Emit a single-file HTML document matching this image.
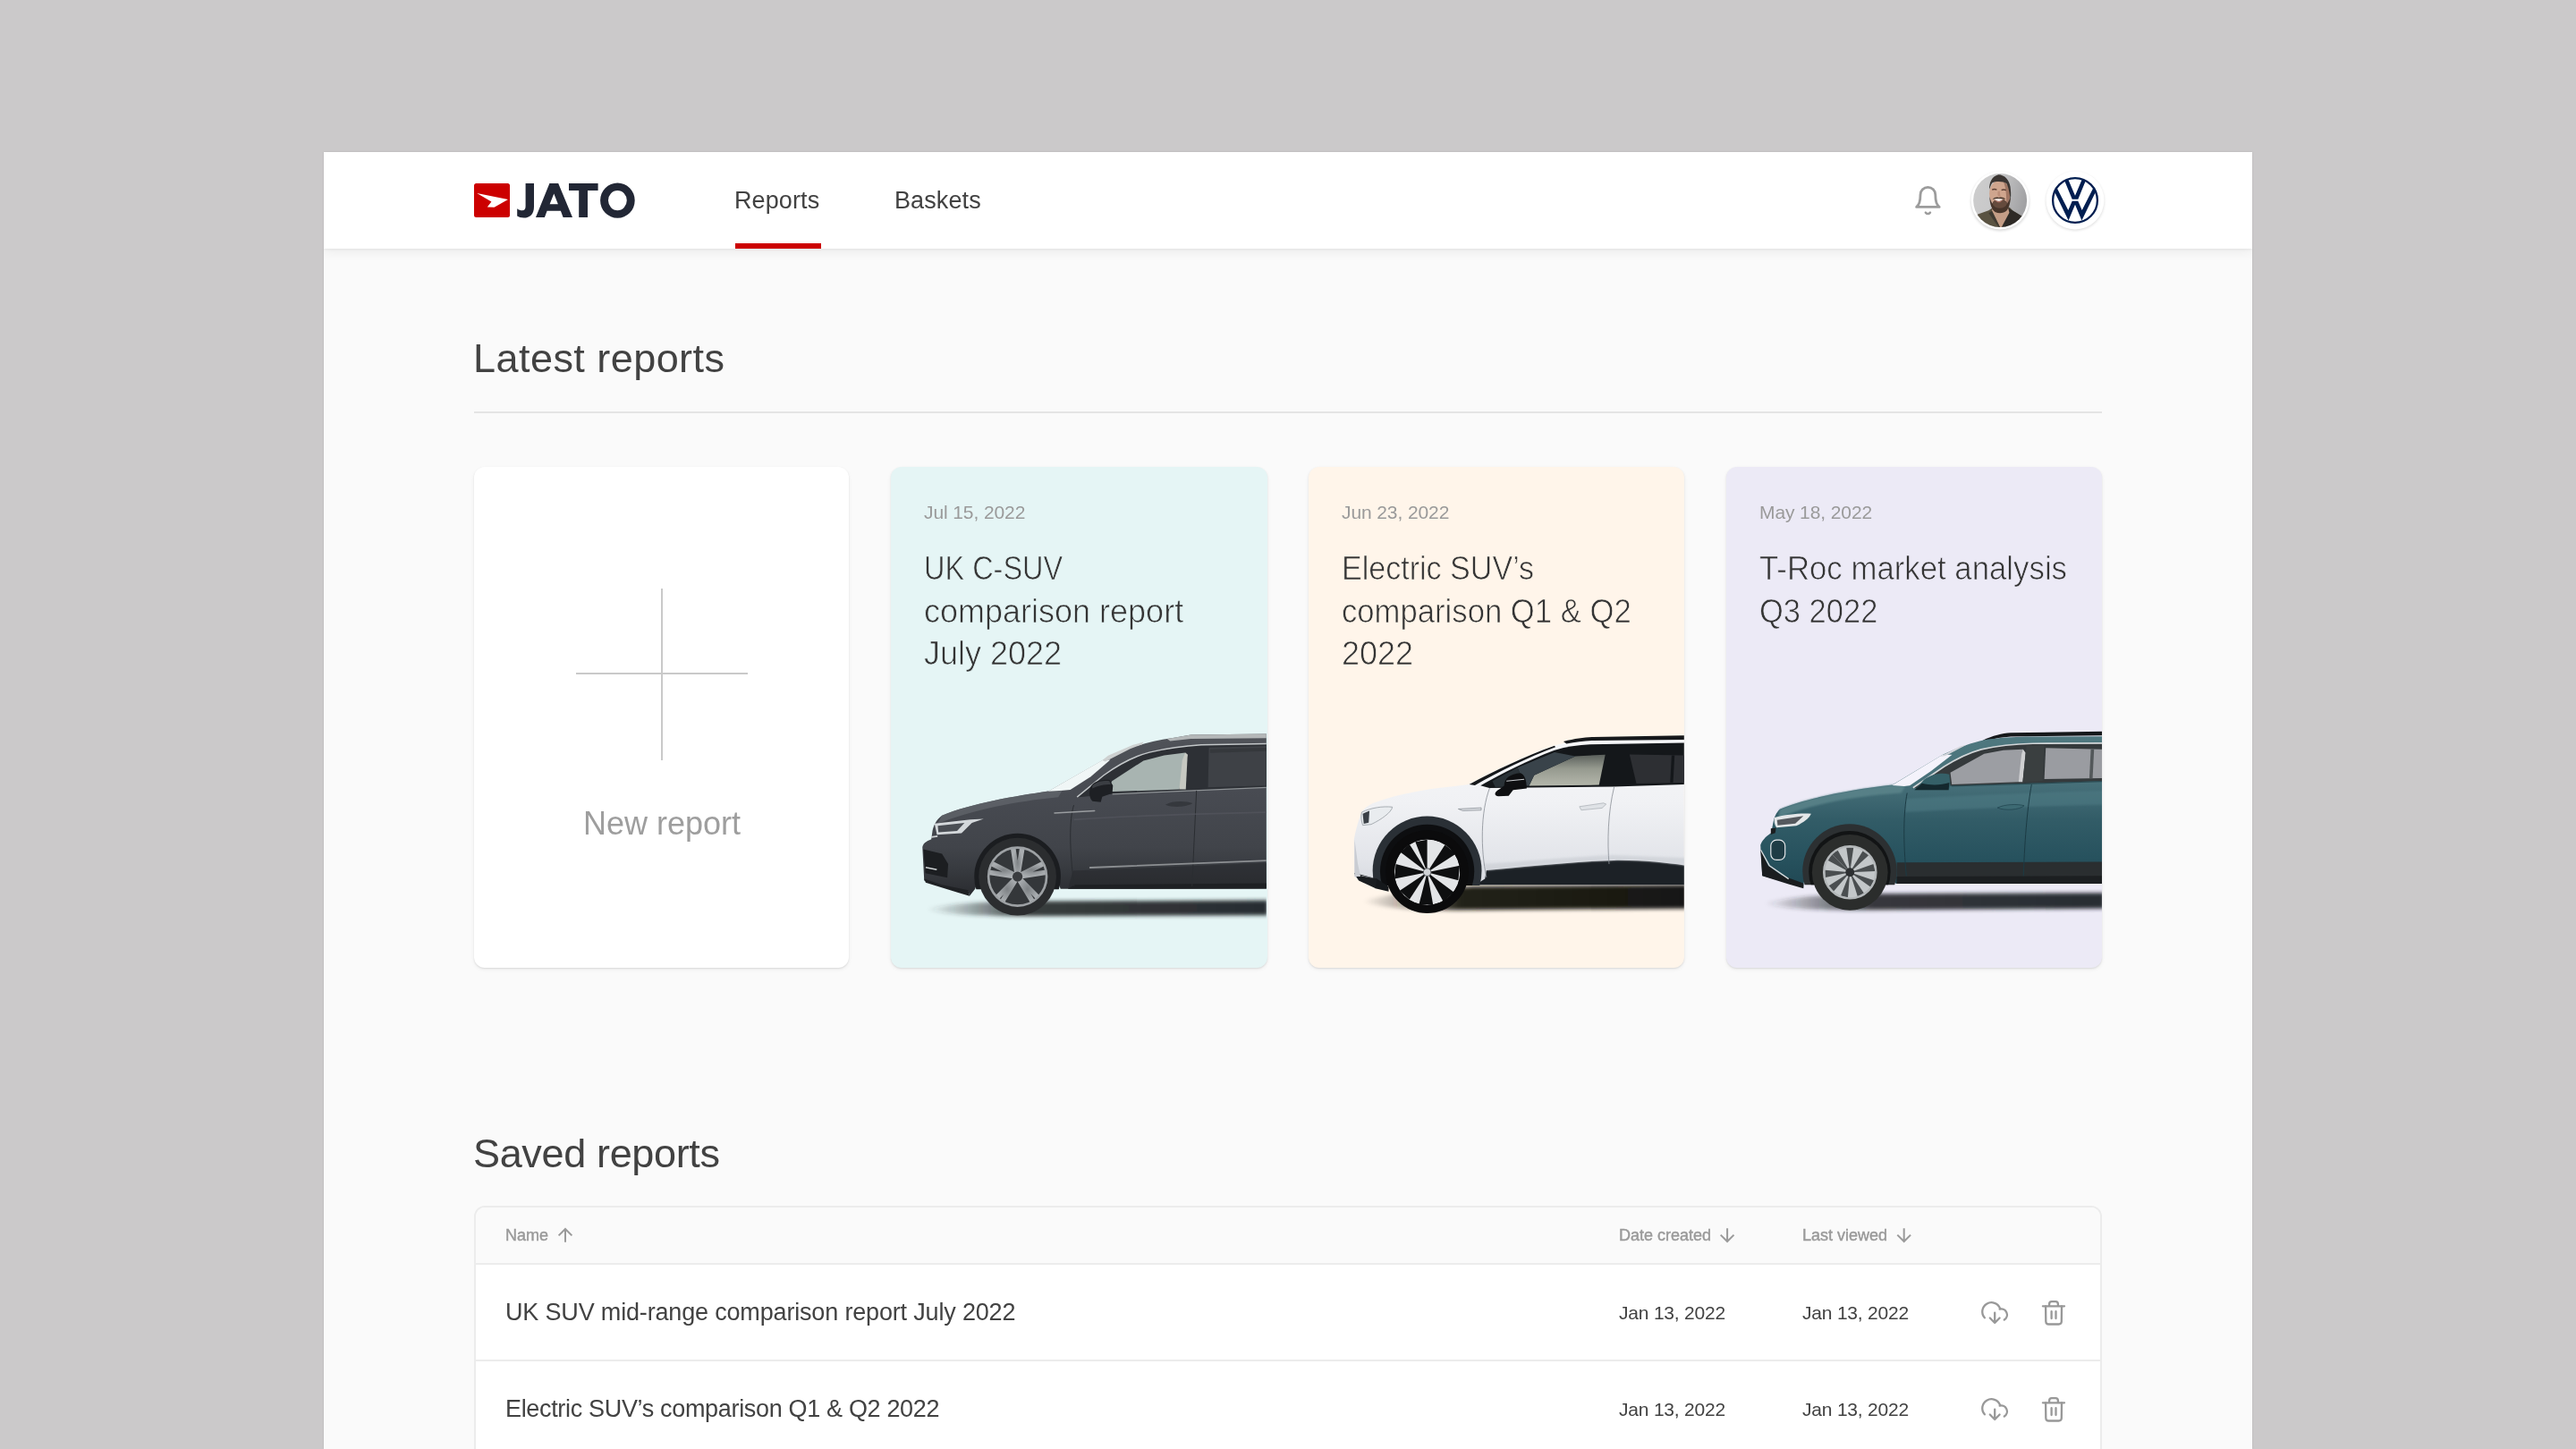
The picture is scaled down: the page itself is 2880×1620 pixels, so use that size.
<!DOCTYPE html>
<html lang="en">
<head>
<meta charset="utf-8">
<title>JATO Reports</title>
<style>
*{box-sizing:border-box;margin:0;padding:0}
html,body{width:2880px;height:1620px;overflow:hidden;background:#cbc9ca}
body{position:relative;font-family:"Liberation Sans",sans-serif;color:#424242}
.abs{position:absolute}
.t{position:absolute;white-space:nowrap;will-change:transform}
#frame{position:absolute;left:362px;top:170px;width:2155.6px;height:1450px;background:#fafafa;box-shadow:0 0 2.5px rgba(0,0,0,.09);overflow:hidden}
#hdr{position:absolute;left:0;top:0;width:2156px;height:108px;background:#fff;box-shadow:0 1px 3px rgba(0,0,0,.06),0 4px 12px rgba(0,0,0,.06)}
.nav{font-size:27px;line-height:27px;color:#424242;letter-spacing:0.1px}
.h1{font-size:45px;line-height:45px;color:#424242}
.card{position:absolute;top:521.6px;width:420px;height:560px;border-radius:12px;overflow:hidden;box-shadow:0 1px 2px rgba(0,0,0,.10),0 2px 5px rgba(0,0,0,.05)}
.cdate{font-size:21px;line-height:21px;color:#9a9a9a;left:37px;top:40.3px;letter-spacing:-0.1px}
.ctitle{will-change:transform;position:absolute;left:37px;top:90px;font-size:36px;line-height:47.5px;color:#343434;white-space:nowrap}
.car{position:absolute;left:0;top:0;width:420px;height:560px}
#tbl{position:absolute;left:530px;top:1348px;width:1820px;height:300px;border:2px solid #ececec;border-radius:12px;background:#fff;overflow:hidden}
.th{font-size:18px;line-height:18px;color:#9a9a9a;-webkit-text-stroke:0.45px #9a9a9a;letter-spacing:0px}
.rt{font-size:27px;line-height:27px;color:#424242;letter-spacing:-0.17px}
.dt{font-size:21px;line-height:21px;color:#424242;letter-spacing:-0.2px}
.ico{position:absolute;overflow:visible}
</style>
</head>
<body>
<div id="frame"><div id="hdr"></div></div>

<!-- LOGO -->
<svg class="ico" style="left:530px;top:205px" width="182" height="40" viewBox="0 0 182 40">
  <rect x="0" y="0" width="40" height="38" rx="2.5" fill="#cc0000"/>
  <path d="M3.2 10.9 L38 18 L22.6 26.8 L14.8 26.5 L19.4 20.6 Z" fill="#fff"/>
  <g fill="#222735">
    <path d="M57.6 0 H67 V26 C67 34.5 62.5 38.6 55.6 38.6 C52.5 38.6 50 37.8 48.2 36.6 V28.2 C49.9 29.5 51.9 30.3 54 30.3 C56.6 30.3 57.6 28.6 57.6 25.6 Z"/>
    <path d="M84.4 0 H94.2 L110 38 H99.6 L96.9 30.8 H81.6 L78.9 38 H69 Z M84.6 23.2 H93.9 L89.3 11.4 Z"/>
    <path d="M106 0 H138.6 V8 H127 V38 H117.2 V8 H106 Z"/>
    <path fill-rule="evenodd" d="M160.4 -0.6 A19.3 19.7 0 1 0 160.4 38.8 A19.3 19.7 0 1 0 160.4 -0.6 Z M160.4 8 A10.4 11.1 0 1 1 160.4 30.2 A10.4 11.1 0 1 1 160.4 8 Z"/>
  </g>
</svg>

<!-- NAV -->
<div class="t nav" style="left:821px;top:210.5px">Reports</div>
<div class="abs" style="left:822px;top:272px;width:96px;height:6px;background:#cc0000"></div>
<div class="t nav" style="left:1000px;top:210.5px">Baskets</div>

<!-- HEADER ICONS placeholder -->

<!-- LATEST REPORTS -->
<div class="t h1" style="left:529px;top:378px;letter-spacing:0.45px">Latest reports</div>
<div class="abs" style="left:530px;top:460px;width:1820px;height:2px;background:#e4e4e4"></div>

<div class="card" style="left:530px;width:419px;background:#fff">
  <div class="abs" style="left:209px;top:136px;width:2px;height:192px;background:#c9c9c9"></div>
  <div class="abs" style="left:114px;top:230px;width:192px;height:2px;background:#c9c9c9"></div>
  <div class="t" style="left:0;width:420px;text-align:center;top:381px;font-size:36px;line-height:36px;color:#9e9e9e">New report</div>
</div>

<div class="card" id="c2" style="left:996px;width:420.8px;background:#e5f5f5">
  <!--CAR1S--><svg class="car" viewBox="0 0 420 560" width="420" height="560">
  <defs>
    <linearGradient id="c1body" x1="0" y1="0" x2="0" y2="1"><stop offset="0" stop-color="#505359"/><stop offset="0.35" stop-color="#484b52"/><stop offset="0.7" stop-color="#41444a"/><stop offset="0.85" stop-color="#36393e"/><stop offset="1" stop-color="#292b2f"/></linearGradient>
    <linearGradient id="c1sh" x1="0" y1="0" x2="1" y2="0"><stop offset="0" stop-color="#2a2e30" stop-opacity="0"/><stop offset="0.12" stop-color="#2a2e30" stop-opacity="0.35"/><stop offset="0.3" stop-color="#23272a" stop-opacity="0.9"/><stop offset="1" stop-color="#202427" stop-opacity="0.95"/></linearGradient>
    <radialGradient id="c1rim" cx="0.5" cy="0.5" r="0.5"><stop offset="0" stop-color="#7d8184"/><stop offset="1" stop-color="#a9adb0"/></radialGradient>
    <filter id="c1blur" x="-10%" y="-60%" width="120%" height="220%"><feGaussianBlur stdDeviation="14"/></filter>
    <filter id="c1soft"><feGaussianBlur stdDeviation="3"/></filter>
    <clipPath id="c1clip"><rect x="0" y="0" width="2390" height="1449"/></clipPath>
    <clipPath id="c1arch"><rect x="380" y="700" width="700" height="470"/></clipPath>
  </defs>
  <g transform="translate(24 278.4) scale(0.165631)" clip-path="url(#c1clip)">
    <!-- ground shadow -->
    <path d="M90 1305 C250 1265 500 1250 900 1250 L2400 1245 L2400 1345 L700 1352 C400 1350 180 1335 90 1305 Z" fill="url(#c1sh)" filter="url(#c1blur)"/>
    <!-- body -->
    <path d="M80 1112 L68 885 C75 852 108 842 128 832 L134 792 C140 742 160 702 200 672 C400 590 700 540 920 508 L1290 296 C1450 212 1600 172 1750 150 L1880 128 L2400 122 L2400 1166 L1050 1168 L1000 1168 A296 296 0 0 0 424 1168 L386 1216 L378 1182 L200 1152 Z" fill="url(#c1body)"/>
    <!-- hood highlight -->
    <path d="M200 672 C400 590 700 540 920 508 L1015 497 L985 548 C700 575 400 635 170 728 Z" fill="#62666c" opacity="0.75" filter="url(#c1soft)"/>
    <!-- lower body darker -->
    <path d="M1085 1045 L2400 992 L2400 1166 L1050 1168 Z" fill="#26282c" opacity="0.55"/>
    <path d="M1095 1140 L2400 1130 L2400 1166 L1050 1168 Z" fill="#1c1e21" opacity="0.8"/>
    <!-- windshield sliver -->
    <path d="M916 510 L1290 295 L1336 296 L1205 410 L1066 498 L1016 503 Z" fill="#f0f6f6"/>
    <!-- roof rails -->
    <path d="M1282 300 L1322 268 L1490 196 L1560 176 L1552 192 L1470 222 L1302 308 Z" fill="#cdd0d0"/>
    <path d="M1720 154 L1880 128 L2400 122 L2400 150 L1880 154 L1740 170 Z" fill="#b4b7b8"/>
    <!-- window surround -->
    <path d="M1108 550 L1290 402 C1400 322 1500 272 1600 246 C1750 212 1850 202 1950 196 L2400 188 L2400 482 L1350 527 Z" fill="#2d3035"/>
    <path d="M1112 548 L1290 402 C1400 322 1500 272 1600 246 C1750 212 1850 202 1950 196 L2400 188" fill="none" stroke="#c3c7c9" stroke-width="9"/>
    <!-- front glass -->
    <path d="M1312 512 L1348 440 L1560 302 L1700 266 L1842 248 L1858 262 L1802 496 Z" fill="#a8b4b1"/>
    <path d="M1842 248 L1858 262 L1846 496 L1802 496 L1822 300 Z" fill="#c6c8c1"/>
    <!-- rear glass -->
    <path d="M2002 214 L2400 202 L2400 470 L1996 482 Z" fill="#3e4146"/>
    <path d="M2010 250 L2400 238 L2400 215 L2010 226 Z" fill="#35383c"/>
    <!-- beltline -->
    <path d="M1350 528 L2400 482" fill="none" stroke="#8f9396" stroke-width="7"/>
    <!-- mirror -->
    <path d="M1198 502 C1200 452 1260 426 1332 432 L1354 470 L1350 522 L1282 546 L1272 582 L1216 576 C1194 552 1194 522 1198 502 Z" fill="#1e2024"/>
    <path d="M1215 470 C1250 440 1300 436 1330 440 L1340 462 C1300 462 1250 470 1215 490 Z" fill="#3b3e43"/>
    <!-- door lines -->
    <path d="M1090 602 C1058 700 1060 900 1092 1150" fill="none" stroke="#2a2d31" stroke-width="6"/>
    <path d="M1918 504 L1888 1150" fill="none" stroke="#2a2d31" stroke-width="6"/>
    <!-- handle -->
    <path d="M1708 600 C1760 568 1850 574 1892 590 C1850 616 1760 622 1708 600 Z" fill="#35383d"/>
    <!-- side badge / crease -->
    <path d="M960 656 L1230 640" fill="none" stroke="#9a9da0" stroke-width="9" stroke-linecap="round"/>
    <path d="M1090 700 C1400 680 1900 660 2400 650" fill="none" stroke="#565960" stroke-width="10" opacity="0.6"/>
    <!-- lower chrome trim -->
    <path d="M1200 1024 L2400 976" fill="none" stroke="#8c8f92" stroke-width="11" stroke-linecap="round"/>
    <!-- wheel arch -->
    <g clip-path="url(#c1arch)"><circle cx="710" cy="1085" r="292" fill="#1b1d20"/></g>
    <!-- front fascia -->
    <path d="M150 726 L392 700 L482 695 L402 722 L332 792 L166 802 Z" fill="#d4d8db"/>
    <path d="M172 742 L352 722 L302 776 L176 786 Z" fill="#4a4e54"/>
    <path d="M128 818 L170 812" stroke="#cfd3d5" stroke-width="10"/>
    <path d="M74 900 L200 930 L242 1000 L236 1092 L88 1062 Z" fill="#1c1e21"/>
    <path d="M90 1022 L165 1038" stroke="#cfd3d5" stroke-width="9"/>
    <path d="M80 1100 L200 1140 L378 1176 L386 1216 L300 1190 L90 1125 Z" fill="#1f2124"/>
    <!-- wheel -->
    <circle cx="710" cy="1085" r="262" fill="#2b2d2f"/>
    <circle cx="710" cy="1085" r="204" fill="#34373a"/>
    <g stroke="url(#c1rim)" stroke-width="34" stroke-linecap="butt">
      <path d="M710 1085 L680 890 M710 1085 L742 890"/>
      <path d="M710 1085 L886 996 M710 1085 L905 1056"/>
      <path d="M710 1085 L848 1226 M710 1085 L812 1254"/>
      <path d="M710 1085 L606 1254 M710 1085 L572 1226"/>
      <path d="M710 1085 L515 1056 M710 1085 L534 996"/>
    </g>
    <circle cx="710" cy="1085" r="196" fill="none" stroke="#9da1a4" stroke-width="16"/>
    <circle cx="710" cy="1085" r="34" fill="#3a3c3f"/>
  </g>
</svg>
<!--CAR1E-->
  <div class="t cdate">Jul 15, 2022</div>
  <div class="ctitle" style="-webkit-text-stroke:0.7px #e5f5f5"><span style="display:inline-block;transform-origin:0 50%;transform:scaleX(0.902)">UK C-SUV</span><br>comparison report<br>July 2022</div>
</div>

<div class="card" id="c3" style="left:1463.4px;width:419.6px;background:#fff5ea">
  <!--CAR2S--><svg class="car" viewBox="0 0 420 560" width="420" height="560">
  <defs>
    <linearGradient id="c2body" x1="0" y1="0" x2="0" y2="1"><stop offset="0" stop-color="#f6f7f9"/><stop offset="0.45" stop-color="#f0f1f4"/><stop offset="0.8" stop-color="#e3e5ea"/><stop offset="1" stop-color="#d5d8de"/></linearGradient>
    <linearGradient id="c2sh" x1="0" y1="0" x2="1" y2="0"><stop offset="0" stop-color="#171412" stop-opacity="0"/><stop offset="0.1" stop-color="#171412" stop-opacity="0.25"/><stop offset="0.3" stop-color="#171412" stop-opacity="0.95"/><stop offset="1" stop-color="#171412" stop-opacity="1"/></linearGradient>
    <linearGradient id="c2glass" x1="0" y1="0" x2="0" y2="1"><stop offset="0" stop-color="#5b605c"/><stop offset="0.45" stop-color="#969a8f"/><stop offset="1" stop-color="#b4b7ab"/></linearGradient>
    <filter id="c2blur" x="-10%" y="-60%" width="120%" height="220%"><feGaussianBlur stdDeviation="12"/></filter>
    <filter id="c2soft"><feGaussianBlur stdDeviation="5"/></filter>
    <clipPath id="c2clip"><rect x="0" y="0" width="2374" height="1449"/></clipPath>
    <clipPath id="c2arch"><rect x="250" y="600" width="800" height="545"/></clipPath>
  </defs>
  <g transform="translate(26.6 278.4) scale(0.165631)" clip-path="url(#c2clip)">
    <!-- ground shadow -->
    <path d="M200 1250 C350 1210 600 1170 950 1150 L2400 1140 L2400 1300 L800 1310 C500 1310 300 1290 200 1250 Z" fill="url(#c2sh)" filter="url(#c2blur)"/>
    <!-- body -->
    <path d="M150 1085 L146 835 C160 760 180 690 200 645 C230 610 260 592 300 580 C450 525 650 492 800 478 L920 462 C1100 370 1300 270 1500 200 C1580 178 1650 165 1720 158 L2400 138 L2400 1140 L960 1140 A340 340 0 0 0 300 1100 L290 1160 L180 1110 Z" fill="url(#c2body)"/>
    <!-- black roof -->
    <path d="M1560 172 C1640 152 1700 146 1760 142 L2400 132 L2400 160 L1760 166 C1700 170 1640 176 1580 188 Z" fill="#16181b"/>
    <!-- dark glasshouse -->
    <path d="M1000 470 C1150 385 1320 300 1500 232 C1580 206 1660 196 1740 192 L2400 182 L2400 462 L1900 478 L1060 486 Z" fill="#14171a"/>
    <path d="M924 462 C1100 370 1300 272 1500 202 L1506 210 C1320 280 1130 372 962 468 Z" fill="#16181b"/>
    <!-- front glass -->
    <path d="M1328 472 L1362 400 L1640 272 L1842 262 L1800 466 Z" fill="url(#c2glass)"/>
    <path d="M1250 350 L1500 245 L1640 272 L1362 400 L1328 472 L1300 472 Z" fill="#39434a"/>
    <path d="M1080 440 L1250 350 L1300 472 L1100 480 Z" fill="#2a3237"/>
    <!-- rear glass -->
    <path d="M2006 260 L2400 266 L2400 450 L2052 456 Z" fill="#2d2f33"/>
    <path d="M2290 266 L2310 266 L2300 450 L2280 450 Z" fill="#14171a"/>
    <!-- lower cladding -->
    <path d="M1040 1042 C1300 1020 1600 985 1900 975 C2100 972 2280 995 2400 1012 L2400 1140 L965 1140 L1030 1100 Z" fill="#1c2126"/>
    <!-- wheel arch cladding -->
    <g clip-path="url(#c2arch)">
      <circle cx="640" cy="1045" r="368" fill="#2a3036"/>
      <circle cx="640" cy="1050" r="318" fill="#0d0e10"/>
    </g>
    <!-- front lower lip -->
    <path d="M148 1060 L185 1075 L295 1100 L290 1165 L380 1185 L380 1150 L300 1100 Z" fill="#15181b"/>
    <path d="M146 1060 L200 1082 L300 1100 L292 1165 L178 1112 Z" fill="#1a1d20"/>
    <!-- headlight -->
    <path d="M198 650 C260 620 340 608 405 615 C400 650 330 700 262 732 L205 738 C195 710 192 680 198 650 Z" fill="#e9ecef" stroke="#9aa0a6" stroke-width="5"/>
    <path d="M205 660 L250 640 L245 720 L212 728 Z" fill="#3b4046"/>
    <!-- body shading -->
    <path d="M150 835 L172 1000 L190 1085 L150 1085 Z" fill="#c9ccd2"/>
    <path d="M1020 1000 C1300 985 1600 950 1900 940 L2400 960 L2400 1012 C2280 995 2100 972 1900 975 C1600 985 1300 1020 1040 1042 Z" fill="#cfd2d8" opacity="0.8" filter="url(#c2soft)"/>
    <!-- door lines -->
    <path d="M1062 486 C1000 650 1000 900 1040 1090" fill="none" stroke="#8b9097" stroke-width="5"/>
    <path d="M1902 480 C1860 650 1855 850 1868 1000" fill="none" stroke="#8b9097" stroke-width="5"/>
    <!-- handle & badge -->
    <path d="M1668 612 L1830 588 L1848 596 L1820 622 L1680 636 Z" fill="#dfe2e6" stroke="#a3a8ae" stroke-width="4"/>
    <path d="M850 628 L1005 620 L1005 636 L880 640 Z" fill="#d9dce0" stroke="#7d838a" stroke-width="4"/>
    <!-- mirror -->
    <path d="M1100 520 C1110 500 1140 490 1160 470 C1160 420 1200 390 1270 385 C1300 400 1310 430 1312 490 L1220 500 L1190 540 L1120 542 C1100 540 1096 530 1100 520 Z" fill="#0e0f11"/>
    <path d="M1175 440 L1295 428" stroke="#c9ccd0" stroke-width="7"/>
    <!-- wheel -->
    <circle cx="640" cy="1052" r="280" fill="#0b0b0c"/>
    <circle cx="640" cy="1055" r="222" fill="#e3e5e7"/>
    <g fill="#0e0f10">
      <path d="M640 1055 L560 850 L640 836 Z"/>
      <path d="M640 1055 L760 870 L835 930 Z"/>
      <path d="M640 1055 L860 1010 L850 1110 Z"/>
      <path d="M640 1055 L820 1190 L750 1255 Z"/>
      <path d="M640 1055 L680 1275 L585 1272 Z"/>
      <path d="M640 1055 L520 1240 L455 1180 Z"/>
      <path d="M640 1055 L420 1100 L428 1000 Z"/>
      <path d="M640 1055 L460 920 L520 865 Z"/>
    </g>
    <circle cx="640" cy="1055" r="228" fill="none" stroke="#0b0b0c" stroke-width="14"/>
    <circle cx="640" cy="1055" r="26" fill="#cfd2d5" stroke="#55595d" stroke-width="6"/>
  </g>
</svg>
<!--CAR2E-->
  <div class="t cdate">Jun 23, 2022</div>
  <div class="ctitle" style="-webkit-text-stroke:0.7px #fff5ea"><span style="display:inline-block;transform-origin:0 50%;transform:scaleX(0.946)">Electric SUV’s</span><br><span style="display:inline-block;transform-origin:0 50%;transform:scaleX(0.963)">comparison Q1 &amp; Q2</span><br>2022</div>
</div>

<div class="card" id="c4" style="left:1930px;background:#eceaf6">
  <!--CAR3S--><svg class="car" viewBox="0 0 420 560" width="420" height="560">
  <defs>
    <linearGradient id="c3body" x1="0" y1="0" x2="0" y2="1"><stop offset="0" stop-color="#4f787f"/><stop offset="0.3" stop-color="#48717a"/><stop offset="0.55" stop-color="#325c67"/><stop offset="0.8" stop-color="#27525e"/><stop offset="1" stop-color="#204753"/></linearGradient>
    <linearGradient id="c3sh" x1="0" y1="0" x2="1" y2="0"><stop offset="0" stop-color="#25282c" stop-opacity="0"/><stop offset="0.12" stop-color="#25282c" stop-opacity="0.35"/><stop offset="0.32" stop-color="#22252a" stop-opacity="0.9"/><stop offset="1" stop-color="#1e2126" stop-opacity="0.95"/></linearGradient>
    <filter id="c3blur" x="-10%" y="-60%" width="120%" height="220%"><feGaussianBlur stdDeviation="14"/></filter>
    <filter id="c3soft"><feGaussianBlur stdDeviation="6"/></filter>
    <clipPath id="c3arch"><rect x="350" y="650" width="720" height="490"/></clipPath>
  </defs>
  <g transform="translate(20 278.4) scale(0.165631)">
    <!-- ground shadow -->
    <path d="M130 1265 C300 1225 520 1205 900 1200 L2430 1195 L2430 1300 L700 1310 C420 1308 220 1295 130 1265 Z" fill="url(#c3sh)" filter="url(#c3blur)"/>
    <!-- roof rail -->
    <path d="M1610 165 C1680 132 1740 118 1800 114 L2430 104 L2430 132 L1800 140 C1740 144 1690 152 1640 168 Z" fill="#15181a"/>
    <!-- body -->
    <path d="M122 1078 L110 872 C125 830 160 805 182 790 L196 720 C205 680 215 655 240 630 C400 560 700 500 1000 466 L1340 262 C1450 210 1540 180 1620 162 C1720 148 1820 142 1900 140 L2430 138 L2430 1130 L1030 1132 L1020 1130 A312 312 0 0 0 402 1130 L400 1160 L300 1130 Z" fill="url(#c3body)"/>
    <!-- hood highlight -->
    <path d="M240 632 C400 560 700 500 1000 466 L1090 470 L1060 520 C760 540 460 590 230 690 Z" fill="#5d868c" opacity="0.8" filter="url(#c3soft)"/>
    <path d="M1090 560 C1400 540 1900 520 2430 505 L2430 600 C1900 610 1400 630 1085 650 Z" fill="#4f7c85" opacity="0.55" filter="url(#c3soft)"/>
    <!-- windshield sliver -->
    <path d="M998 468 L1340 261 L1404 262 L1262 372 L1118 470 L1080 474 Z" fill="#f4f3fb"/>
    <path d="M1320 275 L1460 205 L1500 195 L1360 270 Z" fill="#d5d6dc"/>
    <!-- lower cladding -->
    <path d="M1030 990 L2430 985 L2430 1132 L1030 1132 Z" fill="#2a2e30"/>
    <path d="M1030 1085 L2430 1080 L2430 1132 L1030 1132 Z" fill="#1c1f21"/>
    <!-- window surround -->
    <path d="M1135 488 L1350 342 C1440 285 1520 248 1600 226 C1720 198 1850 188 1950 186 L2430 184 L2430 440 L1400 472 Z" fill="#353a3c"/>
    <path d="M1140 485 L1350 342 C1440 285 1520 248 1600 226 C1720 198 1850 188 1950 186 L2430 184" fill="none" stroke="#d2d6d8" stroke-width="10"/>
    <!-- front glass -->
    <path d="M1402 462 L1392 382 L1620 256 L1750 232 L1882 226 L1896 250 L1852 446 Z" fill="#9c9ea3"/>
    <path d="M1882 226 L1900 250 L1880 446 L1852 446 L1872 260 Z" fill="#cfd0d2"/>
    <!-- B pillar -->
    <path d="M1905 200 L2025 196 L2015 440 L1880 446 Z" fill="#3a3f40"/>
    <!-- rear glass -->
    <path d="M2036 216 L2430 226 L2430 420 L2026 426 Z" fill="#9a9ca1"/>
    <path d="M2340 224 L2362 224 L2352 420 L2330 420 Z" fill="#53585a"/>
    <!-- beltline -->
    <path d="M1400 474 L2430 442" fill="none" stroke="#2a4a52" stroke-width="7"/>
    <!-- mirror -->
    <path d="M1150 500 L1215 430 C1260 395 1330 380 1385 395 L1392 470 L1380 500 Z" fill="#356068"/>
    <path d="M1150 500 L1200 455 C1260 470 1330 468 1385 450 L1380 500 Z" fill="#14282e"/>
    <!-- door lines -->
    <path d="M1100 520 C1075 650 1072 850 1095 1080" fill="none" stroke="#1b3a44" stroke-width="6"/>
    <path d="M1940 462 C1915 600 1895 800 1885 1080" fill="none" stroke="#1b3a44" stroke-width="6"/>
    <!-- handle -->
    <path d="M1710 620 C1760 594 1850 594 1890 606 C1860 634 1760 642 1710 620 Z" fill="#3d6a73" stroke="#1d404a" stroke-width="4"/>
    <!-- wheel arch cladding -->
    <g clip-path="url(#c3arch)">
      <circle cx="712" cy="1048" r="318" fill="#2c3032"/>
      <circle cx="712" cy="1052" r="276" fill="#121415"/>
    </g>
    <!-- front fascia -->
    <path d="M205 686 C280 664 380 655 452 660 C440 690 400 720 352 742 L218 754 C205 735 200 710 205 686 Z" fill="#e3e6e8"/>
    <path d="M222 702 L400 676 L345 726 L226 738 Z" fill="#55595e"/>
    <path d="M180 760 L215 756 L210 790 L180 800 Z" fill="#1b1e20"/>
    <rect x="180" y="838" width="96" height="134" rx="38" fill="#1f3c45" stroke="#e8eaec" stroke-width="7"/>
    <path d="M110 900 L160 1010 L250 1075 L400 1130 L400 1165 L300 1135 L122 1080 Z" fill="#1a1d1f"/>
    <path d="M112 905 L170 1010 L300 1100" fill="none" stroke="#d9dcde" stroke-width="8"/>
    <!-- wheel -->
    <circle cx="714" cy="1056" r="256" fill="#2b2d2c"/>
    <circle cx="714" cy="1056" r="178" fill="#c3c7c9"/>
    <g fill="#4a4e50">
      <path d="M714 1056 L690 890 L738 890 Z"/>
      <path d="M714 1056 L800 912 L842 940 Z"/>
      <path d="M714 1056 L872 1000 L884 1048 Z"/>
      <path d="M714 1056 L876 1110 L852 1154 Z"/>
      <path d="M714 1056 L808 1196 L766 1218 Z"/>
      <path d="M714 1056 L700 1224 L652 1214 Z"/>
      <path d="M714 1056 L604 1184 L572 1146 Z"/>
      <path d="M714 1056 L548 1090 L546 1040 Z"/>
      <path d="M714 1056 L566 976 L592 934 Z"/>
      <path d="M714 1056 L632 908 L590 930 Z"/>
    </g>
    <circle cx="714" cy="1056" r="176" fill="none" stroke="#b3b7b9" stroke-width="14"/>
    <circle cx="714" cy="1056" r="30" fill="#2d3032"/>
  </g>
</svg>
<!--CAR3E-->
  <div class="t cdate">May 18, 2022</div>
  <div class="ctitle" style="-webkit-text-stroke:0.7px #eceaf6"><span style="display:inline-block;transform-origin:0 50%;transform:scaleX(0.966)">T-Roc market analysis</span><br><span style="display:inline-block;transform-origin:0 50%;transform:scaleX(0.958)">Q3 2022</span></div>
</div>

<!-- SAVED REPORTS -->
<div class="t h1" style="left:529.4px;top:1267px;letter-spacing:-0.35px">Saved reports</div>
<div id="tbl">
  <div class="abs" style="left:0;top:0;width:1820px;height:64px;background:#fafafa;border-bottom:2px solid #ececec"></div>
  <div class="abs" style="left:0;top:170px;width:1820px;height:2px;background:#ececec"></div>
</div>
<div class="t th" style="left:565px;top:1372px">Name</div>
<div class="t th" style="left:1810px;top:1372px">Date created</div>
<div class="t th" style="left:2015px;top:1372px">Last viewed</div>

<div class="t rt" style="left:564.6px;top:1454px">UK SUV mid-range comparison report July 2022</div>
<div class="t dt" style="left:1810px;top:1456.5px">Jan 13, 2022</div>
<div class="t dt" style="left:2015px;top:1456.5px">Jan 13, 2022</div>

<div class="t rt" style="left:564.6px;top:1562px;letter-spacing:-0.33px">Electric SUV’s comparison Q1 &amp; Q2 2022</div>
<div class="t dt" style="left:1810px;top:1564.5px">Jan 13, 2022</div>
<div class="t dt" style="left:2015px;top:1564.5px">Jan 13, 2022</div>

<svg class="ico" style="left:0;top:0" width="2880" height="1620" viewBox="0 0 2880 1620">
  <defs>
    <clipPath id="avc"><circle cx="2236.15" cy="224" r="30"/></clipPath>
    <clipPath id="vwc"><circle cx="2320" cy="223.95" r="25.2"/></clipPath>
    <linearGradient id="avbg" x1="0" y1="0" x2="1" y2="0.3"><stop offset="0" stop-color="#cdcdcd"/><stop offset="0.45" stop-color="#c9c9ca"/><stop offset="1" stop-color="#a2a2a4"/></linearGradient>
    <filter id="avblur" x="-10%" y="-10%" width="120%" height="120%"><feGaussianBlur stdDeviation="14"/></filter>
    <filter id="shd" x="-30%" y="-30%" width="160%" height="160%"><feGaussianBlur stdDeviation="1.6"/></filter>
  </defs>
  <!-- bell -->
  <g fill="none" stroke="#9c9c9c" stroke-width="2.8" stroke-linecap="round" stroke-linejoin="round">
    <path d="M2142.6 231.4 C2145.4 229.6 2147 226.4 2147 217.8 A8.4 8.4 0 0 1 2163.8 217.8 C2163.8 226.4 2165.4 229.6 2168.2 231.4 Z"/>
    <path d="M2152.8 237.6 Q2155.4 240.6 2158 237.6" stroke-width="2.4"/>
  </g>
  <!-- avatar -->
  <circle cx="2236.15" cy="225.4" r="32.6" fill="#000" opacity="0.16" filter="url(#shd)"/>
  <circle cx="2236.15" cy="224" r="32.4" fill="#fff"/>
  <g clip-path="url(#avc)">
    <rect x="2204" y="192" width="64" height="64" fill="url(#avbg)"/>
    <g transform="translate(2200 188) scale(0.049689)" filter="url(#avblur)">
      <path d="M100 1130 L230 1035 L470 950 L560 890 L940 880 L1020 960 L1220 1080 L1400 1250 L1400 1449 L100 1449 Z" fill="#5a5343"/>
      <path d="M905 890 L1020 960 L1220 1080 L1400 1250 L1400 1449 L770 1449 L770 1290 Z" fill="#2d2b26"/>
      <path d="M560 880 L905 880 L935 1000 L760 1330 L725 1330 L545 960 Z" fill="#c49d86"/>
      <path d="M545 960 L725 1330 L700 1340 L470 1010 Z" fill="#403b31"/>
      <ellipse cx="718" cy="575" rx="232" ry="305" fill="#cfa58e"/>
      <path d="M800 300 C900 340 955 470 950 640 C940 800 900 900 850 950 C880 760 880 480 800 300 Z" fill="#8c6352" opacity="0.7"/>
      <path d="M490 640 C495 800 535 930 615 985 C700 1025 810 1015 870 960 C935 890 962 760 968 630 C945 700 915 760 885 800 C850 650 590 650 555 800 C528 760 505 700 490 640 Z" fill="#46352b"/>
      <path d="M555 800 C590 650 850 650 885 800 C860 870 800 900 720 900 C640 900 580 870 555 800 Z" fill="#654b3d"/>
      <path d="M560 700 C600 655 640 645 700 662 C760 645 810 655 850 700 C800 690 640 690 560 700 Z" fill="#46352b"/>
      <path d="M588 700 Q690 672 800 700 Q700 800 588 700 Z" fill="#efe6e1"/>
      <path d="M588 700 Q700 800 800 700 Q705 850 588 700 Z" fill="#a86d60"/>
      <path d="M486 480 C478 330 540 178 690 145 C832 150 932 262 957 420 C968 520 978 610 962 690 C942 600 930 470 880 350 C800 296 650 288 548 330 C512 380 500 440 486 480 Z" fill="#3a3531"/>
      <path d="M545 470 Q600 445 655 472 L650 500 Q600 480 550 500 Z M755 478 Q810 452 865 482 L860 510 Q810 488 760 506 Z" fill="#5a3f34"/>
      <path d="M680 520 Q660 610 690 640 L740 640 Q720 600 720 520 Z" fill="#b98a74" opacity="0.8"/>
    </g>
  </g>
  <!-- vw -->
  <circle cx="2320" cy="225.2" r="32.6" fill="#000" opacity="0.13" filter="url(#shd)"/>
  <circle cx="2320" cy="224" r="32.4" fill="#fff"/>
  <circle cx="2320" cy="223.95" r="24.9" fill="none" stroke="#001e50" stroke-width="2.3"/>
  <g clip-path="url(#vwc)" fill="#001e50">
    <polygon points="2306.83,198.71 2316.73,222.67 2323.30,222.67 2333.17,198.71 2328.50,198.71 2320.00,218.80 2311.50,198.71"/>
    <polygon points="2293.63,207.59 2312.57,246.47 2320.00,228.85 2327.43,246.47 2346.37,207.59 2341.65,207.59 2327.71,235.03 2323.27,224.79 2316.73,224.79 2312.29,235.03 2298.35,207.59"/>
  </g>
  <!-- sort arrows -->
  <g fill="none" stroke="#9a9a9a" stroke-width="2" stroke-linecap="butt" stroke-linejoin="miter">
    <path d="M632 1388.7 V1374 M624.6 1381.4 L632 1374 L639.4 1381.4"/>
    <path d="M1931.1 1373.2 V1388 M1923.7 1380.6 L1931.1 1388 L1938.5 1380.6"/>
    <path d="M2128.7 1373.2 V1388 M2121.3 1380.6 L2128.7 1388 L2136.1 1380.6"/>
  </g>
  <g transform="translate(0,0)" fill="none" stroke="#989898" stroke-width="2.3" stroke-linecap="round" stroke-linejoin="round">
    <path d="M2218.85 1473.3 A10.25 10.25 0 1 1 2236.1 1462.9"/>
    <path d="M2235.7 1463.6 A6.6 6.6 0 0 1 2240.8 1475.6"/>
    <path d="M2230.2 1467.6 V1478.9 M2224.8 1473.5 L2230.2 1479 L2235.6 1473.5"/>
    <path d="M2283.9 1460.3 H2308 M2291.1 1460.3 V1457.9 Q2291.1 1455.2 2293.8 1455.2 H2298.2 Q2300.9 1455.2 2300.9 1457.9 V1460.3"/>
    <path d="M2287.1 1460.3 L2287.3 1477.5 Q2287.4 1480.5 2290.4 1480.5 H2301.7 Q2304.7 1480.5 2304.8 1477.5 L2305 1460.3"/>
    <path d="M2293.6 1466.2 V1474 M2298.5 1466.2 V1474"/>
  </g>
  <g transform="translate(0,108)" fill="none" stroke="#989898" stroke-width="2.3" stroke-linecap="round" stroke-linejoin="round">
    <path d="M2218.85 1473.3 A10.25 10.25 0 1 1 2236.1 1462.9"/>
    <path d="M2235.7 1463.6 A6.6 6.6 0 0 1 2240.8 1475.6"/>
    <path d="M2230.2 1467.6 V1478.9 M2224.8 1473.5 L2230.2 1479 L2235.6 1473.5"/>
    <path d="M2283.9 1460.3 H2308 M2291.1 1460.3 V1457.9 Q2291.1 1455.2 2293.8 1455.2 H2298.2 Q2300.9 1455.2 2300.9 1457.9 V1460.3"/>
    <path d="M2287.1 1460.3 L2287.3 1477.5 Q2287.4 1480.5 2290.4 1480.5 H2301.7 Q2304.7 1480.5 2304.8 1477.5 L2305 1460.3"/>
    <path d="M2293.6 1466.2 V1474 M2298.5 1466.2 V1474"/>
  </g>
</svg>

</body>
</html>
